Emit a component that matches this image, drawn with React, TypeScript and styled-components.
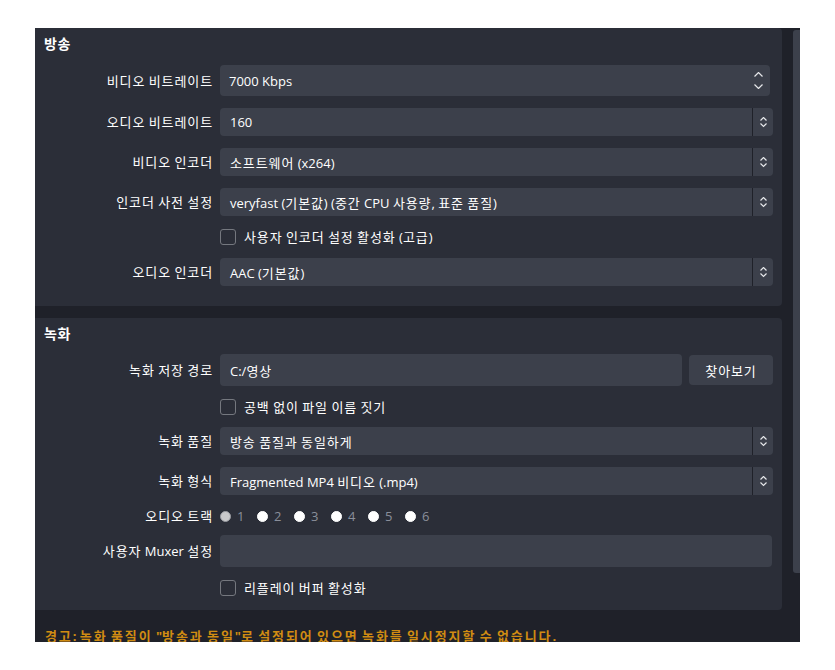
import React from "react";
import styled, { createGlobalStyle } from "styled-components";

const GlobalStyle = createGlobalStyle`
  html, body { margin: 0; padding: 0; background: #ffffff; }
  body {
    font-family: "Open Sans", "Noto Sans CJK KR", sans-serif;
    font-size: 13px;
    color: #ffffff;
  }
`;

const Frame = styled.div`
  margin: 28px 0 0 35px;
  width: 765px;
  height: 614px;
  background: #1f2129;
  display: flex;
  overflow: hidden;
`;

const Content = styled.div`
  width: 747px;
  display: flex;
  flex-direction: column;
  gap: 12px;
  flex-shrink: 0;
`;

const ScrollTrack = styled.div`
  flex: 1;
  padding: 2px 0 0 11px;
`;

const ScrollThumb = styled.div`
  width: 7px;
  height: 543px;
  background: #3c404b;
  border-radius: 3px 0 0 3px;
`;

const Group = styled.section<{ $bottom: number }>`
  background: #2b2e38;
  border-radius: 0 4px 4px 0;
  padding: 8px 9px ${(p) => p.$bottom}px 0;
  display: flex;
  flex-direction: column;
`;

const GroupTitle = styled.h2<{ $gap: number }>`
  margin: 0 0 ${(p) => p.$gap}px 0;
  padding-left: 9px;
  font-size: 14px;
  font-weight: 700;
  line-height: 16px;
  height: 16px;
`;

const Rows = styled.div`
  display: flex;
  flex-direction: column;
  gap: 12px;
`;

const Row = styled.div<{ $h: number }>`
  display: grid;
  grid-template-columns: 185px 1fr;
  align-items: center;
  height: ${(p) => p.$h}px;
`;

const Label = styled.div`
  text-align: right;
  padding-right: 7px;
  white-space: nowrap;
  line-height: 18px;
`;

const Field = styled.div<{ $h: number; $mr?: number }>`
  height: ${(p) => p.$h}px;
  margin-right: ${(p) => p.$mr ?? 0}px;
  background: #3c404b;
  border-radius: 4px;
  display: flex;
  align-items: stretch;
  min-width: 0;
`;

const FieldText = styled.div<{ $pl?: number }>`
  flex: 1;
  display: flex;
  align-items: center;
  padding-left: ${(p) => p.$pl ?? 10}px;
  white-space: pre;
  overflow: hidden;
`;

const ArrowButton = styled.div`
  width: 20px;
  border-left: 1px solid #1f2129;
  display: flex;
  flex-direction: column;
  align-items: center;
  justify-content: center;
  gap: 2px;
`;

const SpinArrows = styled.div`
  width: 24px;
  display: flex;
  flex-direction: column;
  align-items: center;
  justify-content: center;
  gap: 6px;
`;

const PathLine = styled.div`
  display: flex;
  gap: 7px;
  align-items: center;
`;

const Button = styled.div`
  width: 84px;
  height: 30px;
  flex-shrink: 0;
  background: #3c404b;
  border-radius: 4px;
  display: flex;
  align-items: center;
  justify-content: center;
`;

const CheckLine = styled.label`
  display: flex;
  align-items: center;
  gap: 8px;
  line-height: 18px;
  white-space: pre;
`;

const CheckBox = styled.span`
  width: 16px;
  height: 16px;
  box-sizing: border-box;
  border: 1.5px solid #75787f;
  border-radius: 3px;
  flex-shrink: 0;
`;

const RadioGroup = styled.div`
  display: flex;
  align-items: center;
`;

const RadioItem = styled.label`
  display: flex;
  align-items: center;
  gap: 6px;
  width: 37px;
  color: #8a8f9a;
  line-height: 16px;
`;

const RadioDot = styled.span<{ $checked?: boolean }>`
  width: 11px;
  height: 11px;
  box-sizing: border-box;
  border-radius: 50%;
  background: ${(p) => (p.$checked ? "#c9c9cb" : "#ffffff")};
  border: 1px solid ${(p) => (p.$checked ? "#9a9ca2" : "#ffffff")};
  flex-shrink: 0;
`;

const Warning = styled.div`
  padding: 4px 0 0 10px;
  line-height: 20px;
  font-weight: 700;
  color: #d08c12;
  white-space: pre;
`;

const Hangul = styled.span<{ $ls: number }>`
  letter-spacing: ${(p) => p.$ls}px;
`;

/* Widens Hangul runs so they match the wider Korean UI face of the reference */
const T = ({ children, ls = 0.9 }: { children: string; ls?: number }) => (
  <span>
    {children.split(/([\uAC00-\uD7A3]+)/).map((s, i) =>
      i % 2 ? (
        <Hangul key={i} $ls={ls}>
          {s}
        </Hangul>
      ) : (
        s
      )
    )}
  </span>
);

const Chevron = ({ dir, w }: { dir: "up" | "down"; w: number }) => {
  const h = w / 2;
  const pts =
    dir === "up"
      ? `0.5,${h} ${w / 2},0.5 ${w - 0.5},${h}`
      : `0.5,0.5 ${w / 2},${h} ${w - 0.5},0.5`;
  return (
    <svg width={w} height={h + 1} viewBox={`0 0 ${w} ${h + 1}`} style={{ display: "block" }}>
      <polyline points={pts} fill="none" stroke="#e6e7ea" strokeWidth="1.2" />
    </svg>
  );
};

const SelectField = ({ value }: { value: string }) => (
  <Field $h={28}>
    <FieldText>
      <T>{value}</T>
    </FieldText>
    <ArrowButton>
      <Chevron dir="up" w={7} />
      <Chevron dir="down" w={7} />
    </ArrowButton>
  </Field>
);

const Check = ({ text }: { text: string }) => (
  <CheckLine>
    <CheckBox />
    <T>{text}</T>
  </CheckLine>
);

const L = ({ text }: { text: string }) => (
  <Label>
    <T>{text}</T>
  </Label>
);

export default function App() {
  return (
    <>
      <GlobalStyle />
      <Frame>
        <Content>
          <Group $bottom={20}>
            <GroupTitle $gap={13}>
              <T ls={0.5}>방송</T>
            </GroupTitle>
            <Rows>
              <Row $h={31}>
                <L text="비디오 비트레이트" />
                <Field $h={31} $mr={3}>
                  <FieldText $pl={9}>7000 Kbps</FieldText>
                  <SpinArrows>
                    <Chevron dir="up" w={9} />
                    <Chevron dir="down" w={9} />
                  </SpinArrows>
                </Field>
              </Row>
              <Row $h={28}>
                <L text="오디오 비트레이트" />
                <SelectField value="160" />
              </Row>
              <Row $h={28}>
                <L text="비디오 인코더" />
                <SelectField value="소프트웨어 (x264)" />
              </Row>
              <Row $h={28}>
                <L text="인코더 사전 설정" />
                <SelectField value="veryfast (기본값) (중간 CPU 사용량, 표준 품질)" />
              </Row>
              <Row $h={18}>
                <span />
                <Check text="사용자 인코더 설정 활성화 (고급)" />
              </Row>
              <Row $h={28}>
                <L text="오디오 인코더" />
                <SelectField value="AAC (기본값)" />
              </Row>
            </Rows>
          </Group>

          <Group $bottom={14}>
            <GroupTitle $gap={12}>
              <T ls={0.5}>녹화</T>
            </GroupTitle>
            <Rows>
              <Row $h={32}>
                <L text="녹화 저장 경로" />
                <PathLine>
                  <Field $h={32} style={{ flex: 1 }}>
                    <FieldText>
                      <T>C:/영상</T>
                    </FieldText>
                  </Field>
                  <Button>
                    <T>찾아보기</T>
                  </Button>
                </PathLine>
              </Row>
              <Row $h={17}>
                <span />
                <Check text="공백 없이 파일 이름 짓기" />
              </Row>
              <Row $h={28}>
                <L text="녹화 품질" />
                <SelectField value="방송 품질과 동일하게" />
              </Row>
              <Row $h={28}>
                <L text="녹화 형식" />
                <SelectField value="Fragmented MP4 비디오 (.mp4)" />
              </Row>
              <Row $h={16}>
                <L text="오디오 트랙" />
                <RadioGroup>
                  {[1, 2, 3, 4, 5, 6].map((n) => (
                    <RadioItem key={n}>
                      <RadioDot $checked={n === 1} />
                      {n}
                    </RadioItem>
                  ))}
                </RadioGroup>
              </Row>
              <Row $h={32}>
                <L text="사용자 Muxer 설정" />
                <Field $h={32} $mr={1} />
              </Row>
              <Row $h={17}>
                <span />
                <Check text="리플레이 버퍼 활성화" />
              </Row>
            </Rows>
          </Group>

          <Warning>
            <T ls={1.9}>경고: 녹화 품질이 "방송과 동일"로 설정되어 있으면 녹화를 일시정지할 수 없습니다.</T>
          </Warning>
        </Content>
        <ScrollTrack>
          <ScrollThumb />
        </ScrollTrack>
      </Frame>
    </>
  );
}
